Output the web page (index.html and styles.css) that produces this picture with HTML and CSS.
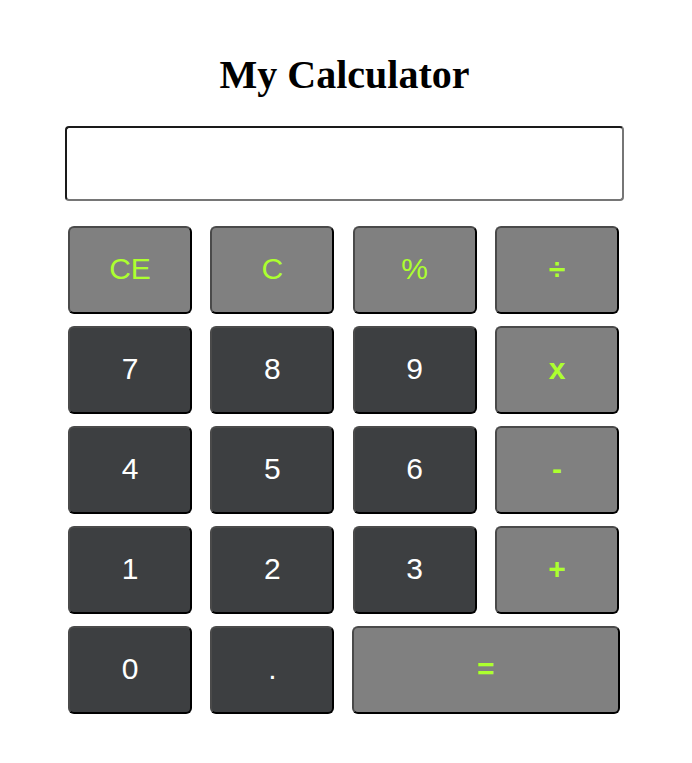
FILE: index.html
```html
<!DOCTYPE html>
<html lang="en">
<head>
<meta charset="utf-8">
<title>My Calculator</title>
<link rel="stylesheet" href="styles.css">
</head>
<body>
<div class="calc">
  <h1 class="title">My Calculator</h1>
  <input class="display" type="text">
  <div class="keys">
    <button class="key op">CE</button>
    <button class="key op">C</button>
    <button class="key op">%</button>
    <button class="key op strong">÷</button>
    <button class="key num">7</button>
    <button class="key num">8</button>
    <button class="key num">9</button>
    <button class="key op strong">x</button>
    <button class="key num">4</button>
    <button class="key num">5</button>
    <button class="key num">6</button>
    <button class="key op strong">-</button>
    <button class="key num">1</button>
    <button class="key num">2</button>
    <button class="key num">3</button>
    <button class="key op strong">+</button>
    <button class="key num">0</button>
    <button class="key num">.</button>
    <button class="key op strong equal">=</button>
  </div>
</div>
</body>
</html>
```
FILE: styles.css
```css
html, body {
  margin: 0;
  padding: 0;
  background: #ffffff;
}

.calc {
  width: 559px;
  margin-left: 65px;
  padding-top: 52px;
  display: flex;
  flex-direction: column;
}

.title {
  margin: 0;
  font-family: "Liberation Serif", "Times New Roman", serif;
  font-size: 40px;
  font-weight: bold;
  line-height: 46px;
  text-align: center;
  color: #000;
}

.display {
  box-sizing: border-box;
  margin-top: 28px;
  width: 559px;
  height: 75px;
  border: 2px solid;
  border-color: #1a1a1a #767676 #767676 #1a1a1a;
  border-radius: 4px;
  background: #fff;
  outline: none;
  padding: 0 10px;
  font-family: "Liberation Sans", Arial, sans-serif;
  font-size: 28px;
}

.keys {
  margin-top: 25px;
  margin-left: 3px;
  display: grid;
  grid-template-columns: repeat(4, 124px);
  grid-auto-rows: 88px;
  column-gap: 18.33px;
  row-gap: 12px;
}

.key {
  box-sizing: border-box;
  border: 2px solid;
  border-color: #4a4a4a #000 #000 #4a4a4a;
  border-radius: 6px;
  font-family: "Liberation Sans", Arial, sans-serif;
  font-size: 30px;
  padding: 0 0 2px;
  cursor: pointer;
}

.num {
  background: #3d3f41;
  color: #ffffff;
}

.op {
  background: #808080;
  color: #adff2f;
}

.strong {
  font-weight: bold;
}

.equal {
  grid-column: span 2;
  margin-left: -1px;
  margin-right: -1px;
}
```
